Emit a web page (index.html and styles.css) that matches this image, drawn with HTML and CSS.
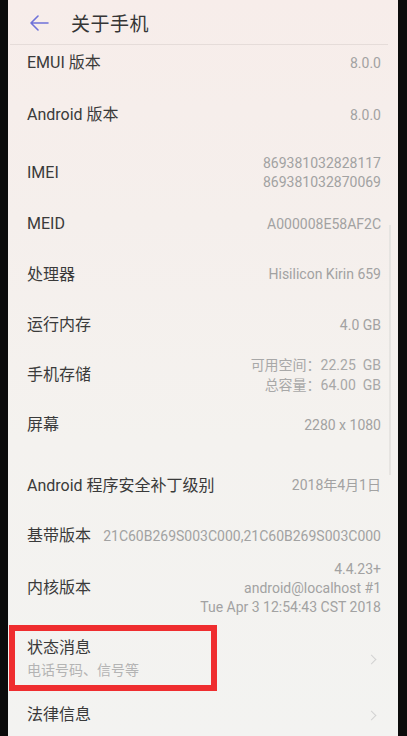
FILE: index.html
```html
<!DOCTYPE html>
<html lang="zh-CN">
<head>
<meta charset="utf-8">
<title>关于手机</title>
<link rel="stylesheet" href="styles.css">
</head>
<body>
<div class="screen">
  <header class="appbar">
    <svg class="back" width="20" height="16" viewBox="0 0 20 16" aria-hidden="true">
      <path d="M19 8H2M9 1L2 8L9 15" fill="none" stroke="#6f72d9" stroke-width="1.6" stroke-linecap="round" stroke-linejoin="round"/>
    </svg>
    <h1 class="title">关于手机</h1>
  </header>
  <div class="list">
    <div class="row r-emui"><span class="label">EMUI 版本</span><span class="value">8.0.0</span></div>
    <div class="row r-android"><span class="label">Android 版本</span><span class="value">8.0.0</span></div>
    <div class="row r-imei"><span class="label">IMEI</span><span class="value multi">869381032828117<br>869381032870069</span></div>
    <div class="row r-std"><span class="label">MEID</span><span class="value">A000008E58AF2C</span></div>
    <div class="row r-cpu"><span class="label">处理器</span><span class="value">Hisilicon Kirin 659</span></div>
    <div class="row r-std"><span class="label">运行内存</span><span class="value">4.0 GB</span></div>
    <div class="row r-std"><span class="label">手机存储</span><span class="value multi storage">可用空间：22.25&nbsp; GB<br>总容量：64.00&nbsp; GB</span></div>
    <div class="row r-std"><span class="label">屏幕</span><span class="value">2280 x 1080</span></div>
    <div class="row r-patch"><span class="label">Android 程序安全补丁级别</span><span class="value">2018年4月1日</span></div>
    <div class="row r-std"><span class="label">基带版本</span><span class="value">21C60B269S003C000,21C60B269S003C000</span></div>
    <div class="row r-kernel"><span class="label">内核版本</span><span class="value multi">4.4.23+<br>android@localhost #1<br>Tue Apr 3 12:54:43 CST 2018</span></div>
    <div class="row r-status">
      <div class="stack"><span class="label">状态消息</span><span class="sub">电话号码、信号等</span></div>
      <span class="chev"></span>
    </div>
    <div class="row r-legal"><span class="label">法律信息</span><span class="chev"></span></div>
  </div>
  <div class="scrollbar"></div>
  <div class="highlight"></div>
</div>
</body>
</html>
```
FILE: styles.css
```css
html, body {
  margin: 0;
  padding: 0;
  background: #0b0b0b;
}
body {
  width: 407px;
  height: 736px;
  overflow: hidden;
  font-family: Roboto, "Noto Sans CJK SC", sans-serif;
}
.screen {
  position: relative;
  margin-left: 8px;
  width: 390px;
  height: 736px;
  overflow: hidden;
  background: linear-gradient(180deg, #f7edea 0%, #f5efec 30%, #f4f2ef 60%, #f3f3f1 100%);
}
.appbar {
  height: 44px;
  margin: 0 10px 0 2px;
  border-bottom: 1px solid #e5dcd9;
  display: flex;
  align-items: center;
  padding-top: 0;
  box-sizing: content-box;
}
.back {
  margin-left: 19px;
  margin-top: 1px;
  flex: none;
}
.title {
  margin: 0 0 0 22px;
  font-family: "Noto Sans CJK SC", sans-serif;
  font-weight: 400;
  font-size: 19px;
  color: #353535;
  letter-spacing: 0.5px;
}
.list {
  display: flex;
  flex-direction: column;
}
.row {
  display: flex;
  align-items: center;
  justify-content: space-between;
  padding: 0 17px 0 19px;
  box-sizing: border-box;
  white-space: nowrap;
}
.label {
  font-size: 16px;
  color: #3a3a3a;
  line-height: 20px;
}
.value {
  font-size: 14px;
  color: #a2a2a2;
  text-align: right;
  line-height: 19px;
}
.multi {
  line-height: 19px;
}
.storage {
  line-height: 20px;
  color: #a8a8a8;
}
.r-emui { height: 44px; padding-bottom: 8px; }
.r-android { height: 55px; padding-bottom: 3px; }
.r-imei { height: 55px; padding-top: 3px; }
.r-std { height: 50px; }
.r-cpu { height: 51px; }
.r-patch { height: 61px; padding-top: 10px; }
.r-kernel { height: 58px; padding-bottom: 4px; }
.r-status { height: 71px; padding-top: 9px; }
.r-legal { height: 50px; }
.stack {
  display: flex;
  flex-direction: column;
  gap: 2px;
}
.sub {
  font-size: 14px;
  color: #b4b4b4;
  line-height: 20px;
}
.chev {
  width: 6px;
  height: 6px;
  border-top: 1.2px solid #d2d2d2;
  border-right: 1.2px solid #d2d2d2;
  transform: rotate(45deg);
  margin-right: 6px;
}
.scrollbar {
  position: absolute;
  left: 381px;
  top: 225px;
  width: 2px;
  height: 250px;
  background: #e6e4e1;
}
.highlight {
  position: absolute;
  left: 1px;
  top: 625px;
  width: 208px;
  height: 66px;
  box-sizing: border-box;
  border: 6px solid #ef2d2f;
}
```
